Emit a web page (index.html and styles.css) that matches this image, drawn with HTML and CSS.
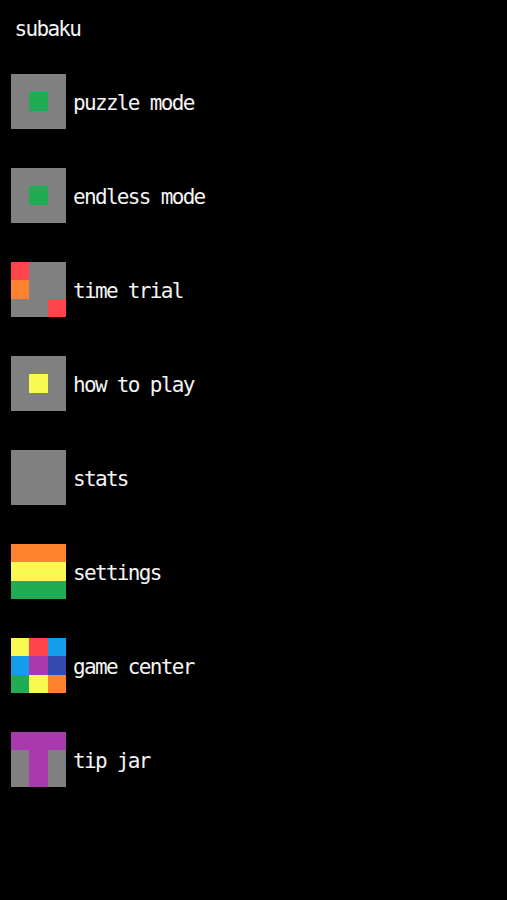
FILE: index.html
```html
<!DOCTYPE html>
<html lang="en">
<head>
<meta charset="utf-8">
<title>subaku</title>
<link rel="stylesheet" href="styles.css">
</head>
<body>
<h1 class="title">subaku</h1>
<nav class="menu">
<a class="item"><span class="icon"><i></i><i></i><i></i><i></i><i class="green"></i></span><span class="label">puzzle mode</span></a>
<a class="item"><span class="icon"><i></i><i></i><i></i><i></i><i class="green"></i></span><span class="label">endless mode</span></a>
<a class="item"><span class="icon"><i class="red"></i><i></i><i></i><i class="orange"></i><i></i><i></i><i></i><i></i><i class="red"></i></span><span class="label">time trial</span></a>
<a class="item"><span class="icon"><i></i><i></i><i></i><i></i><i class="yellow"></i></span><span class="label">how to play</span></a>
<a class="item"><span class="icon"></span><span class="label">stats</span></a>
<a class="item"><span class="icon"><i class="orange row"></i><i class="yellow row"></i><i class="green row"></i></span><span class="label">settings</span></a>
<a class="item"><span class="icon"><i class="yellow"></i><i class="red"></i><i class="sky"></i><i class="sky"></i><i class="purple"></i><i class="blue"></i><i class="green"></i><i class="yellow"></i><i class="orange"></i></span><span class="label">game center</span></a>
<a class="item"><span class="icon"><i class="purple row"></i><i></i><i class="purple"></i><i></i><i></i><i class="purple"></i></span><span class="label">tip jar</span></a>
</nav>
</body>
</html>
```
FILE: styles.css
```css
body {
  margin: 0;
  min-height: 900px;
  background: #000;
  color: #f4f4f4;
  font: 21px/24px "DejaVu Sans Mono", monospace;
  letter-spacing: -1.68px;
}
.title {
  margin: 0;
  padding: 17px 0 0 14.5px;
  font: inherit;
}
.menu {
  display: flex;
  flex-direction: column;
  gap: 39px;
  padding: 33px 0 0 11px;
}
.item {
  display: flex;
  align-items: center;
  gap: 7px;
  height: 55px;
}
.icon {
  display: grid;
  grid-template: repeat(3, 1fr) / repeat(3, 1fr);
  width: 55px;
  height: 55px;
  background: #808080;
}
.label {
  padding-top: 3px;
  white-space: pre;
}
.row { grid-column: 1 / -1; }
.green { background: #22ab55; }
.red { background: #ff444b; }
.orange { background: #ff832f; }
.yellow { background: #f8fa52; }
.sky { background: #149deb; }
.purple { background: #a83aad; }
.blue { background: #3549b0; }
```
